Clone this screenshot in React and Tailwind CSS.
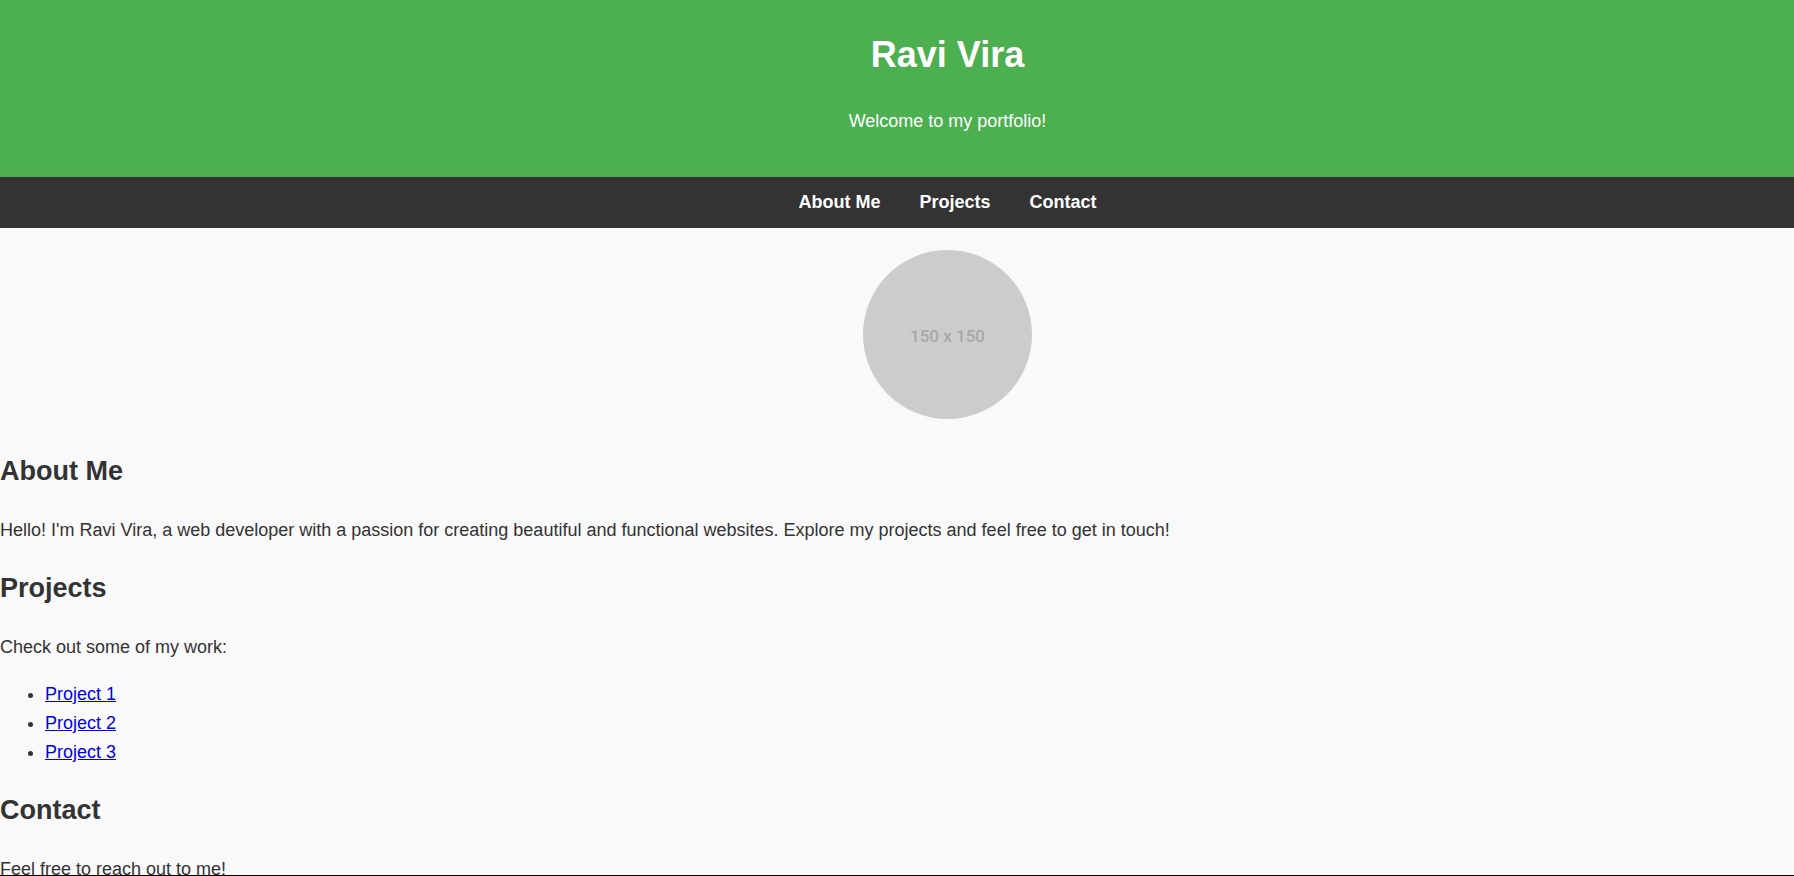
const sections = [
  { id: "about", label: "About Me" },
  { id: "projects", label: "Projects" },
  { id: "contact", label: "Contact" },
];

const projects = ["Project 1", "Project 2", "Project 3"];

function SectionTitle({ children }) {
  return <h2 className="mb-[23px] text-[27px] leading-[44px] font-bold">{children}</h2>;
}

export default function App() {
  return (
    <div className="h-screen overflow-hidden border-b border-black bg-[#f9f9f9] font-['Liberation_Sans',Arial,sans-serif] text-[18px] leading-[29px] text-[#333333]">
      <header className="bg-[#4caf50] pt-[26px] pb-[41px] pl-[101px] text-center text-white">
        <h1 className="mb-[23px] text-[36px] leading-[58px] font-bold">Ravi Vira</h1>
        <p>Welcome to my portfolio!</p>
      </header>

      <nav className="flex justify-center gap-[39px] bg-[#333333] py-[11px] pl-[101px] font-bold text-white">
        {sections.map((s) => (
          <a key={s.id} href={`#${s.id}`}>
            {s.label}
          </a>
        ))}
      </nav>

      <div className="flex justify-center pt-[22px] pb-[30px] pl-[101px]">
        <div className="flex size-[169px] items-center justify-center rounded-full bg-[#cccccc] pt-1 font-['Roboto',sans-serif] text-[17px] font-medium text-[#a8a8a8]">
          150 x 150
        </div>
      </div>

      <main className="flex flex-col gap-[21px]">
        <section id="about">
          <SectionTitle>About Me</SectionTitle>
          <p>
            Hello! I'm Ravi Vira, a web developer with a passion for creating beautiful and
            functional websites. Explore my projects and feel free to get in touch!
          </p>
        </section>

        <section id="projects">
          <SectionTitle>Projects</SectionTitle>
          <p>Check out some of my work:</p>
          <ul className="mt-[18px] list-disc pl-[45px]">
            {projects.map((name) => (
              <li key={name}>
                <a href="#projects" className="text-[#0000ee] underline">
                  {name}
                </a>
              </li>
            ))}
          </ul>
        </section>

        <section id="contact">
          <SectionTitle>Contact</SectionTitle>
          <p>Feel free to reach out to me!</p>
        </section>
      </main>
    </div>
  );
}
